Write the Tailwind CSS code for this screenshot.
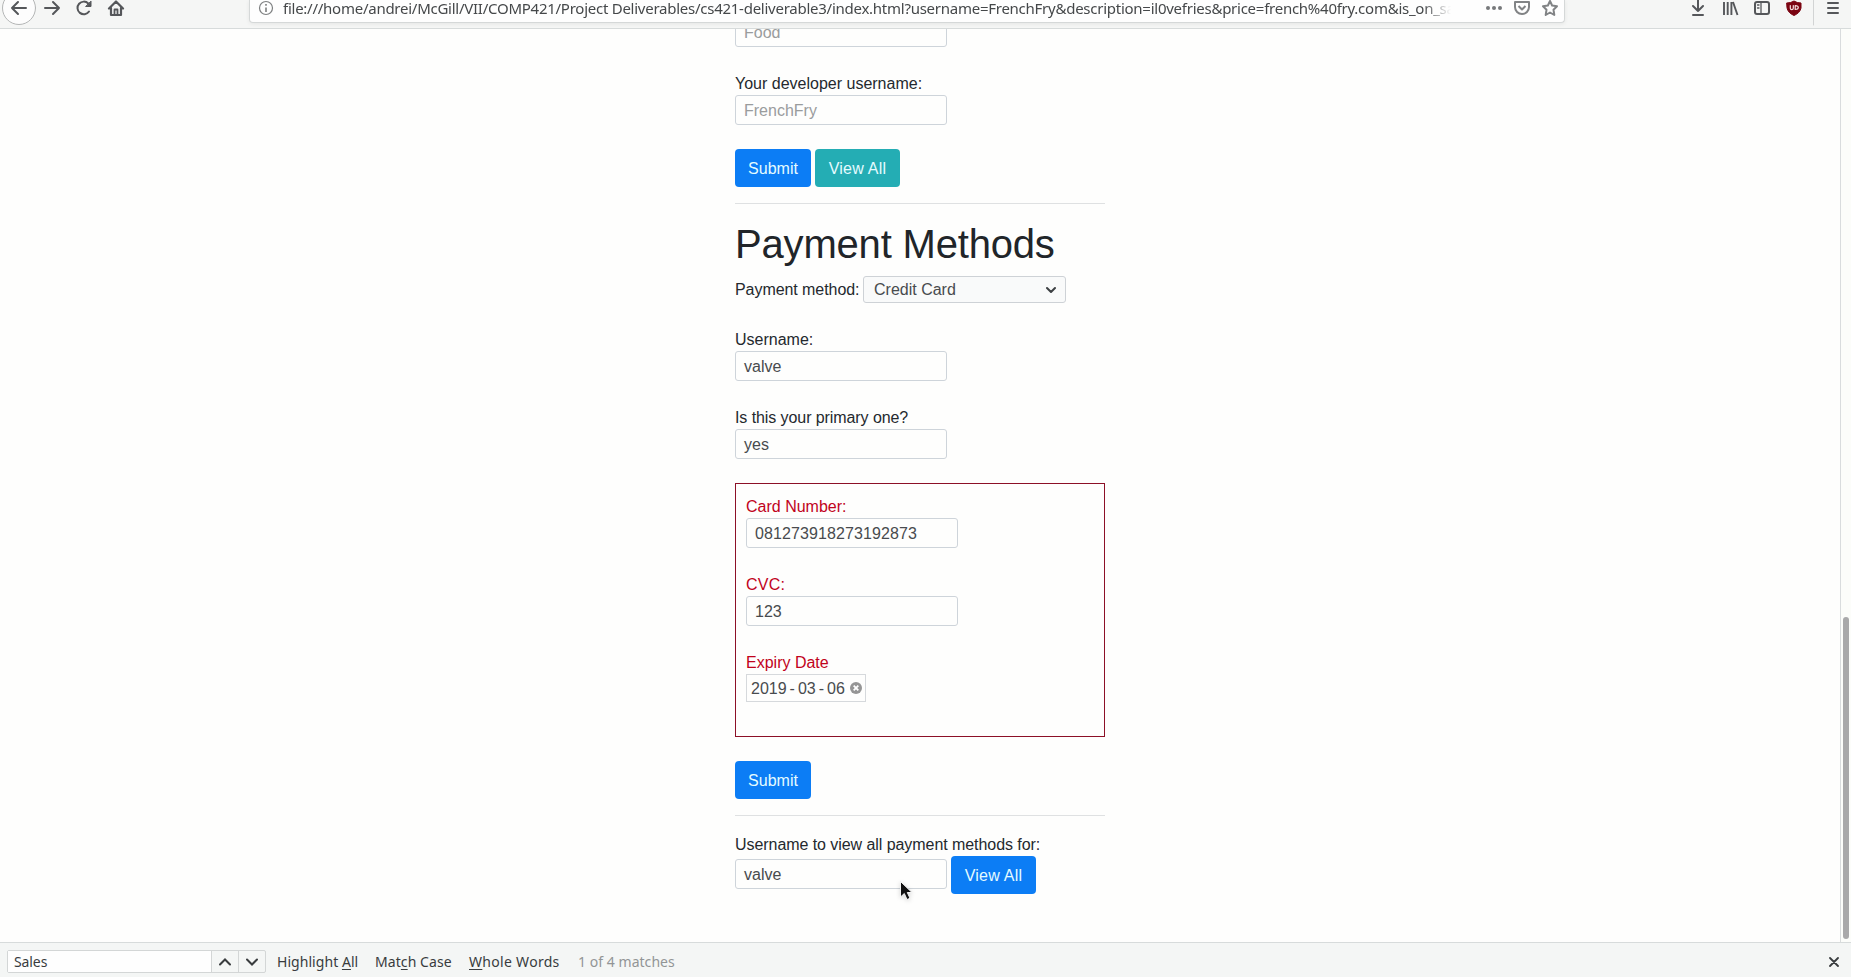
<!DOCTYPE html>
<html lang="en">
<head>
<meta charset="utf-8">
<title>Payment Methods</title>
<script src="https://cdn.jsdelivr.net/npm/@tailwindcss/browser@4"></script>
</head>
<body class="w-[1851px] h-[977px] overflow-hidden bg-[#fefefd] flex flex-col font-['Liberation_Sans',Arial,sans-serif] text-base text-[#24292e]">

<!-- Browser toolbar -->
<header class="h-[29px] shrink-0 flex items-start bg-[#f5f6f5] border-b border-[#d7dbdb] overflow-hidden text-[#55575a] font-['Noto_Sans','Open_Sans',sans-serif]">
  <svg class="w-[249px] h-7 shrink-0" viewBox="0 0 249 28" fill="none" stroke="currentColor" stroke-width="2" stroke-linecap="round" stroke-linejoin="round">
    <circle cx="19" cy="8" r="16.500" fill="#fdfdfd" stroke="#b4b6b6" stroke-width="1"/>
    <path d="M12 8H26M18 2L12 8L18 14"/>
    <path d="M45 8H59M53 2L59 8L53 14"/>
    <path d="M88.300 3.500A6.300 6.300 0 1 0 89 11.500"/>
    <path d="M91 1.500V6.500H86Z" fill="currentColor" stroke-width="1"/>
    <path d="M109 8.500L116 1.500L123 8.500M111 8V15H121V8" stroke-width="2.200"/>
    <path d="M114.500 14V9.500H117.500V14" stroke-width="1.800"/>
  </svg>
  <div class="w-[1316px] h-[23px] shrink-0 flex bg-[#fefefe] border border-t-0 border-[#d5d8d8] rounded-b-[4px] shadow-[0_1px_4px_rgba(0,0,0,0.07)]">
    <svg class="w-[33px] h-[22px] shrink-0" viewBox="0 0 33 22" fill="none" stroke="#7d7f80">
      <circle cx="16" cy="8" r="6.500" stroke-width="1.200"/>
      <path d="M16 7.500V12M16 4V5.700" stroke-width="1.600"/>
    </svg>
    <div class="w-[1168px] h-[22px] overflow-hidden whitespace-nowrap text-[15px] leading-[17px] tracking-[-0.255px] text-[#45484a] [mask-image:linear-gradient(to_right,black_1140px,transparent_1168px)]">file:///home/andrei/McGill/VII/COMP421/Project Deliverables/cs421-deliverable3/index.html?username=FrenchFry&amp;description=il0vefries&amp;price=french%40fry.com&amp;is_on_sa</div>
    <svg class="w-[110px] h-[22px] shrink-0" viewBox="1451 0 110 22" fill="none" stroke="#818385" stroke-width="2" stroke-linejoin="round">
      <g fill="#77797b" stroke="none"><circle cx="1488" cy="8" r="2"/><circle cx="1494" cy="8" r="2"/><circle cx="1500" cy="8" r="2"/></g>
      <path d="M1515 2H1529V7A7 7 0 0 1 1515 7ZM1518.500 6L1522 9.500L1525.500 6"/>
      <path d="M1550 1L1552.100 5.500L1557 6.200L1553.500 9.700L1554.300 15L1550 12.500L1545.700 15L1546.500 9.700L1543 6.200L1547.900 5.500Z"/>
    </svg>
  </div>
  <svg class="w-[286px] h-7 shrink-0" viewBox="1565 0 286 28" fill="none" stroke="currentColor" stroke-width="2" stroke-linecap="round" stroke-linejoin="round">
    <path d="M1698 0V11M1693 6L1698 11L1703 6M1693 15H1703"/>
    <path d="M1724 2V15M1727.700 2V15M1731.400 2V15M1733 2L1737.500 15" stroke-width="1.900" stroke-linecap="butt"/>
    <rect x="1755" y="2" width="14" height="12" rx="2"/>
    <path d="M1761 2V14M1757.500 5H1759M1757.500 8H1759" stroke-width="1.300"/>
    <path d="M1787 3Q1791 3 1794 1Q1797 3 1801 3V8Q1800 13 1794 15.500Q1788 13 1787 8Z" fill="#7b0411" stroke="#7b0411" stroke-width="1"/>
    <path d="M1790.300 5.500V8.300Q1790.300 9.600 1791.800 9.600Q1793.300 9.600 1793.300 8.300V5.500M1795.200 5.700V9.500Q1798.300 9.500 1798.300 7.600Q1798.300 5.700 1795.200 5.700" stroke="#f3dede" stroke-width="1.200"/>
    <path d="M1813.500 0V25" stroke="#d2d4d4" stroke-width="1"/>
    <path d="M1828 3H1838M1828 8H1838M1828 13H1838"/>
  </svg>
</header>

<div class="flex h-[913px] shrink-0">
  <main class="w-[1840px] h-[913px] overflow-hidden pl-[735px]">
    <div class="w-[370px] flex flex-col -mt-3">
      <div class="w-[212px] h-[30px] px-2 border border-[#ced4da] rounded-[3px] leading-[30px] text-[#9a9c9d]">Food</div>

      <div class="mt-6 h-6 leading-[26px]">Your developer username:</div>
      <div class="w-[212px] h-[30px] px-2 border border-[#ced4da] rounded-[3px] leading-[30px] text-[#9a9c9d]">FrenchFry</div>

      <div class="mt-6 flex gap-1 text-[#e4fbff] leading-[40px] text-center">
        <div class="w-[76px] h-[38px] rounded-[4px] bg-[#0c7df5]">Submit</div>
        <div class="w-[85px] h-[38px] rounded-[4px] bg-[#24adb4] tracking-[0.25px]">View All</div>
      </div>
      <hr class="mt-4 border-[#dfe1e2]">

      <h1 class="mt-4 h-12 text-[40px] leading-[48px] tracking-[-0.18px] text-[#212529] whitespace-nowrap">Payment Methods</h1>

      <div class="mt-2 h-[27px] flex">
        <div class="w-32 leading-[27px] tracking-[-0.06px] whitespace-nowrap">Payment method:</div>
        <div class="w-[203px] h-[27px] pl-[10px] pr-[9px] flex items-center justify-between bg-[#f9fafa] border border-[#ced2d6] rounded-[3px] leading-[25px] text-[#484b4e]">
          <span>Credit Card</span>
          <svg class="w-[10px] h-[10px]" viewBox="0 0 10 10" fill="none" stroke="#3d4043" stroke-width="2" stroke-linecap="round" stroke-linejoin="round"><path d="M1 3L5 7L9 3"/></svg>
        </div>
      </div>

      <div class="mt-6 h-6 leading-[26px]">Username:</div>
      <div class="w-[212px] h-[30px] px-2 border border-[#ced4da] rounded-[3px] leading-[30px] text-[#484b4e]">valve</div>

      <div class="mt-6 h-6 leading-[26px] tracking-[-0.08px]">Is this your primary one?</div>
      <div class="w-[212px] h-[30px] px-2 border border-[#ced4da] rounded-[3px] leading-[30px] text-[#484b4e]">yes</div>

      <section class="mt-6 h-[254px] p-[10px] border border-[#8c1027] text-[#c1031c]">
        <div class="h-6 leading-[26px]">Card Number:</div>
        <div class="w-[212px] h-[30px] px-2 border border-[#ced4da] rounded-[3px] leading-[30px] tracking-[0.1px] text-[#484b4e]">081273918273192873</div>
        <div class="mt-6 h-6 leading-[26px] tracking-[0.2px]">CVC:</div>
        <div class="w-[212px] h-[30px] px-2 border border-[#ced4da] rounded-[3px] leading-[30px] text-[#484b4e]">123</div>
        <div class="mt-6 h-6 leading-[26px]">Expiry Date</div>
        <div class="w-[120px] h-7 pl-1 pr-[3px] flex items-center justify-between border border-[#d6d9dc] leading-[26px] text-[#484b4e]">
          <span class="flex gap-[3px] pt-px"><span>2019</span><span>-</span><span>03</span><span>-</span><span>06</span></span>
          <svg class="w-3 h-3" viewBox="0 0 12 12"><circle cx="6" cy="6" r="6" fill="#959595"/><path d="M3.700 3.700L8.300 8.300M8.300 3.700L3.700 8.300" stroke="#fff" stroke-width="1.800"/></svg>
        </div>
      </section>

      <div class="mt-6 w-[76px] h-[38px] rounded-[4px] bg-[#0c7df5] text-[#e4fbff] leading-[40px] text-center">Submit</div>
      <hr class="mt-4 border-[#dfe1e2]">

      <div class="mt-4 h-6 leading-[26px] tracking-[-0.06px]">Username to view all payment methods for:</div>
      <div class="flex gap-1">
        <div class="mt-[3px] w-[212px] h-[30px] px-2 border border-[#ced4da] rounded-[3px] leading-[30px] text-[#484b4e]">valve</div>
        <div class="w-[85px] h-[38px] rounded-[4px] bg-[#0c7df5] text-[#e4fbff] leading-[40px] tracking-[0.25px] text-center">View All</div>
      </div>
    </div>
  </main>
  <aside class="w-[11px] h-[913px] border-l border-[#d9dcdd] bg-[#fcfdfa] pl-[2px] pt-[588px]">
    <div class="w-[6px] h-[322px] rounded-full bg-[#a9a9aa]"></div>
  </aside>
</div>

<!-- Find bar -->
<footer class="h-[35px] shrink-0 flex items-start bg-[#f4f6f5] border-t border-[#d7dbdb] pt-[7px] pl-[7px] pr-3 text-[14px] leading-[23px] text-[#393c3e] font-['Noto_Sans','Open_Sans',sans-serif] whitespace-nowrap">
  <div class="w-[259px] h-[23px] flex border border-[#d3d6d6] rounded-[2px]">
    <div class="w-[203px] pl-[6px] leading-[21px] bg-[#fefefe] tracking-[-0.1px]">Sales</div>
    <div class="w-[27px] border-l border-[#d3d6d6] flex items-center justify-center"><svg class="w-3 h-3" viewBox="0 0 12 12" fill="none" stroke="#393c3e" stroke-width="2" stroke-linecap="round"><path d="M1 8.500L6 3.500L11 8.500"/></svg></div>
    <div class="w-[27px] border-l border-[#d3d6d6] flex items-center justify-center"><svg class="w-3 h-3" viewBox="0 0 12 12" fill="none" stroke="#393c3e" stroke-width="2" stroke-linecap="round"><path d="M1 3.500L6 8.500L11 3.500"/></svg></div>
  </div>
  <div class="ml-[11px] w-[98px] tracking-[0.05px]">Highlight <u class="underline-offset-2">A</u>ll</div>
  <div class="w-[94px] tracking-[0.08px]">Mat<u class="underline-offset-2">c</u>h Case</div>
  <div class="w-[109px] tracking-[0.3px]"><u class="underline-offset-2">W</u>hole Words</div>
  <div class="tracking-[0.04px] text-[#929596]">1 of 4 matches</div>
  <svg class="ml-auto mt-[7px] w-[10px] h-[10px]" viewBox="0 0 10 10" fill="none" stroke="#393c3e" stroke-width="1.800" stroke-linecap="round"><path d="M1 1L9 9M9 1L1 9"/></svg>
</footer>

<!-- Mouse pointer -->
<svg class="absolute left-[899px] top-[880px] w-[16px] h-[22px] drop-shadow-sm" viewBox="0 0 16 22"><path d="M1.500 1.500V17L5.300 13.500L8 19.500L11 18.300L8.300 12.500H13Z" fill="#111" stroke="#f4f4f4" stroke-width="1"/></svg>
</body>
</html>
